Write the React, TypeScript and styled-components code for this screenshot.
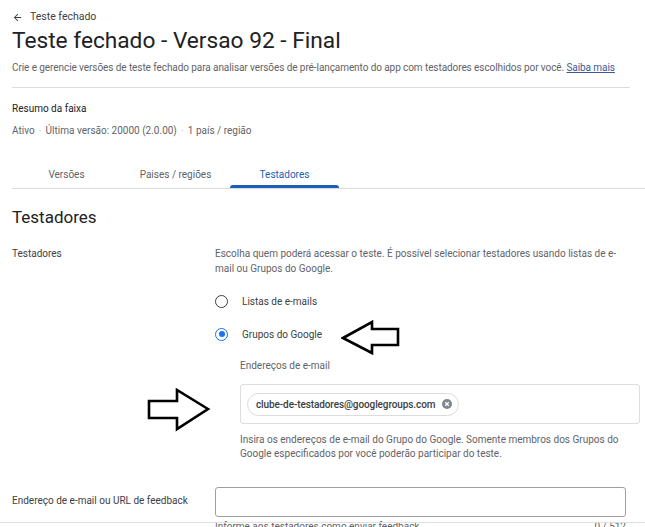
import React from 'react'
import styled, { createGlobalStyle } from 'styled-components'

const GlobalStyle = createGlobalStyle`
    body {
        margin: 0;
        background: #ffffff;
        font-family: Roboto, "Liberation Sans", Arial, sans-serif;
        color: #202124;
    }
`

const App = () => {
    return (
        <Page>
            <GlobalStyle />
            <BackLink>
                <svg width="11" height="11" viewBox="0 0 24 24">
                    <path d="M20 11H7.83l5.59-5.59L12 4l-8 8 8 8 1.41-1.41L7.83 13H20v-2z" fill="#3c4043" />
                </svg>
                Teste fechado
            </BackLink>
            <Title>Teste fechado - Versao 92 - Final</Title>
            <Subtitle>
                Crie e gerencie versões de teste fechado para analisar versões de pré-lançamento do app com testadores escolhidos por você. <LearnMore href="#">Saiba mais</LearnMore>
            </Subtitle>
            <Divider />

            <SummaryTitle>Resumo da faixa</SummaryTitle>
            <SummaryLine>
                Ativo <Dot>•</Dot> Última versão: 20000 (2.0.00) <Dot>•</Dot> 1 país / região
            </SummaryLine>

            <TabBar>
                <Tab>Versões</Tab>
                <Tab>Paises / regiões</Tab>
                <Tab active>Testadores</Tab>
            </TabBar>

            <SectionTitle>Testadores</SectionTitle>

            <FormRow>
                <RowLabel>Testadores</RowLabel>
                <RowBody>
                    <Description>
                        Escolha quem poderá acessar o teste. É possível selecionar testadores usando listas de e-mail ou Grupos do Google.
                    </Description>
                    <RadioRow first>
                        <Radio />
                        <RadioLabel>Listas de e-mails</RadioLabel>
                    </RadioRow>
                    <RadioRow>
                        <Radio checked />
                        <RadioLabel>Grupos do Google</RadioLabel>
                    </RadioRow>
                    <GroupBlock>
                        <FieldLabel>Endereços de e-mail</FieldLabel>
                        <ChipBox>
                            <Chip>
                                clube-de-testadores@googlegroups.com
                                <ChipClose>
                                    <svg width="10" height="10" viewBox="0 0 10 10">
                                        <circle cx="5" cy="5" r="5" fill="#80868b" />
                                        <path d="M3.2 3.2 L6.8 6.8 M6.8 3.2 L3.2 6.8" stroke="#fff" strokeWidth="1.3" />
                                    </svg>
                                </ChipClose>
                            </Chip>
                        </ChipBox>
                        <HelpText>
                            Insira os endereços de e-mail do Grupo do Google. Somente membros dos Grupos do Google especificados por você poderão participar do teste.
                        </HelpText>
                    </GroupBlock>
                </RowBody>
            </FormRow>

            <FeedbackRow>
                <FeedbackLabel>Endereço de e-mail ou URL de feedback</FeedbackLabel>
                <RowBody>
                    <TextInput />
                    <InputFooter>
                        <span>Informe aos testadores como enviar feedback</span>
                        <span>0 / 512</span>
                    </InputFooter>
                </RowBody>
            </FeedbackRow>

            <LeftArrow width="60" height="36" viewBox="0 0 60 36">
                <path d="M2 18 L31 2 L31 9 L57 9 L57 25 L31 25 L31 33 Z" fill="none" stroke="#000" strokeWidth="2.6" strokeLinejoin="miter" />
            </LeftArrow>
            <RightArrow width="64" height="44" viewBox="0 0 64 44">
                <path d="M61 21 L30 2 L30 13 L2 13 L2 30 L30 30 L30 41 Z" fill="none" stroke="#000" strokeWidth="2.6" strokeLinejoin="miter" />
            </RightArrow>

            <BottomLine />
        </Page>
    )
}

const Page = styled.div`
    position: relative;
    padding: 10px 0 0 12px;
    height: 527px;
    box-sizing: border-box;
    overflow: hidden;
`

const BackLink = styled.div`
    font-size: 10.5px;
    line-height: 14px;
    color: #3c4043;
    display: flex;
    align-items: center;
    gap: 7px;
`

const Title = styled.h1`
    margin: 3px 0 0;
    font-size: 22.7px;
    line-height: 28px;
    font-weight: 400;
    color: #202124;
`

const Subtitle = styled.p`
    margin: 6px 0 0;
    font-size: 10px;
    line-height: 14px;
    letter-spacing: -0.08px;
    color: #5f6368;
    white-space: nowrap;
`

const LearnMore = styled.a`
    color: #3b5a9a;
    text-decoration: underline;
`

const Divider = styled.hr`
    margin: 12px 15px 0 0;
    border: none;
    border-top: 1px solid #dadce0;
`

const SummaryTitle = styled.div`
    margin-top: 14px;
    font-size: 10px;
    line-height: 14px;
    color: #202124;
`

const SummaryLine = styled.div`
    margin-top: 8px;
    font-size: 10px;
    line-height: 14px;
    color: #5f6368;
`

const Dot = styled.span`
    color: #bdc1c6;
    font-size: 6px;
    margin: 0 2px;
    vertical-align: 1px;
`

const TabBar = styled.div`
    margin-top: 22px;
    display: flex;
    border-bottom: 1px solid #dadce0;
`

const Tab = styled.div<{ active?: boolean }>`
    width: 109px;
    height: 28px;
    display: flex;
    align-items: center;
    justify-content: center;
    box-sizing: border-box;
    font-size: 10px;
    color: ${p => (p.active ? '#1a5fb4' : '#5f6368')};
    position: relative;
    &::after {
        content: '';
        display: ${p => (p.active ? 'block' : 'none')};
        position: absolute;
        left: 0;
        right: 0;
        bottom: 0;
        height: 3px;
        border-radius: 3px 3px 0 0;
        background: #1a5fb4;
    }
`

const SectionTitle = styled.h2`
    margin: 17px 0 0;
    font-size: 17px;
    line-height: 22px;
    font-weight: 400;
    color: #202124;
`

const FormRow = styled.div`
    margin-top: 18px;
    display: flex;
`

const FeedbackRow = styled.div`
    margin-top: 26px;
    display: flex;
    align-items: flex-start;
`

const RowLabel = styled.div`
    width: 203px;
    flex-shrink: 0;
    font-size: 10px;
    line-height: 15px;
    color: #3c4043;
`

const FeedbackLabel = styled(RowLabel)`
    line-height: 28px;
`

const RowBody = styled.div`
    width: 411px;
`

const Description = styled.p`
    margin: 0;
    width: 405px;
    font-size: 10px;
    line-height: 15px;
    color: #5f6368;
`

const RadioRow = styled.div<{ first?: boolean }>`
    display: flex;
    align-items: center;
    height: 20px;
    margin-top: ${p => (p.first ? '15px' : '13px')};
`

const Radio = styled.span<{ checked?: boolean }>`
    width: 13px;
    height: 13px;
    box-sizing: border-box;
    border-radius: 50%;
    border: 1.5px solid ${p => (p.checked ? '#1a73e8' : '#3c4043')};
    display: flex;
    align-items: center;
    justify-content: center;
    &::after {
        content: '';
        display: ${p => (p.checked ? 'block' : 'none')};
        width: 6px;
        height: 6px;
        border-radius: 50%;
        background: #1a73e8;
    }
`

const RadioLabel = styled.span`
    margin-left: 14px;
    font-size: 10px;
    color: #3c4043;
`

const GroupBlock = styled.div`
    margin-left: 25px;
    margin-top: 15px;
`

const FieldLabel = styled.div`
    font-size: 10px;
    line-height: 14px;
    color: #5f6368;
`

const ChipBox = styled.div`
    margin-top: 11px;
    width: 400px;
    height: 40px;
    box-sizing: border-box;
    border: 1px solid #dadce0;
    border-radius: 3px;
    display: flex;
    align-items: center;
    padding-left: 6px;
`

const Chip = styled.div`
    display: flex;
    align-items: center;
    gap: 7px;
    height: 23px;
    box-sizing: border-box;
    padding: 0 6px 0 8px;
    border: 1px solid #dadce0;
    border-radius: 12px;
    font-size: 10px;
    font-weight: 500;
    letter-spacing: -0.1px;
    color: #3c4043;
`

const ChipClose = styled.span`
    display: flex;
`

const HelpText = styled.p`
    margin: 9px 0 0;
    width: 380px;
    font-size: 10px;
    line-height: 14px;
    color: #5f6368;
`

const TextInput = styled.div`
    width: 411px;
    height: 30px;
    box-sizing: border-box;
    border: 1px solid #9aa0a6;
    border-radius: 3px;
`

const InputFooter = styled.div`
    display: flex;
    justify-content: space-between;
    margin-top: 3px;
    font-size: 10px;
    line-height: 13px;
    color: #5f6368;
`

const LeftArrow = styled.svg`
    position: absolute;
    left: 341px;
    top: 320px;
`

const RightArrow = styled.svg`
    position: absolute;
    left: 147px;
    top: 388px;
`

const BottomLine = styled.div`
    position: absolute;
    left: 0;
    right: 0;
    bottom: 4px;
    border-top: 1px solid #e0e0e0;
`

export default App
